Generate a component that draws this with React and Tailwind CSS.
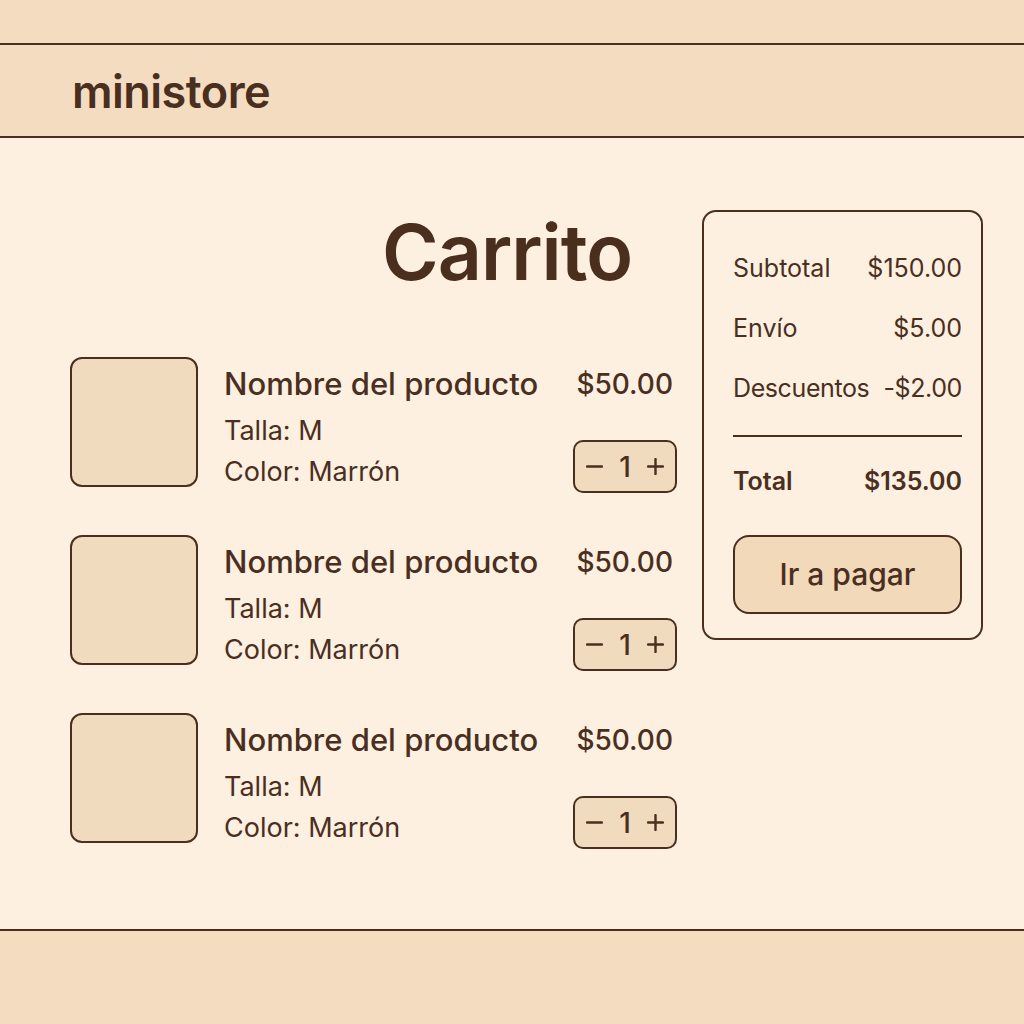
function Minus() {
  return (
    <svg width="17" height="17" viewBox="0 0 17 17" fill="none">
      <line x1="1" y1="8.5" x2="16" y2="8.5" stroke="#4a2f1f" strokeWidth="2.4" strokeLinecap="round" />
    </svg>
  );
}
function Plus() {
  return (
    <svg width="17" height="17" viewBox="0 0 17 17" fill="none">
      <line x1="1" y1="8.5" x2="16" y2="8.5" stroke="#4a2f1f" strokeWidth="2.4" strokeLinecap="round" />
      <line x1="8.5" y1="1" x2="8.5" y2="16" stroke="#4a2f1f" strokeWidth="2.4" strokeLinecap="round" />
    </svg>
  );
}

export default function App() {
  const items = [1, 2, 3];
  const font = { fontFamily: "Inter, 'Noto Sans', sans-serif" };
  return (
    <div className="w-[1024px] h-[1024px] flex flex-col bg-[#fdf0e0] text-[#4a2f1f]" style={font}>
      <div className="h-[43px] bg-[#f3dcc0]" />
      <header className="h-[95px] border-y-2 border-[#4a2f1f] bg-[#f3dcc0] flex items-center pl-[72px]">
        <span className="text-[45px] font-semibold tracking-[-0.5px] leading-none mt-[2px]">ministore</span>
      </header>
      <main className="flex-1 flex pl-[70px] pr-[41px]">
        <div className="flex-1 flex flex-col">
          <h1 className="text-[77px] font-semibold leading-none tracking-[-1px] mt-[76px] pl-[312px]">Carrito</h1>
          <div className="flex flex-col gap-[48px] mt-[66px] pr-[25px]">
            {items.map((i) => (
              <div key={i} className="flex h-[130px]">
                <div className="w-[128px] h-[130px] shrink-0 rounded-[12px] border-2 border-[#4a2f1f] bg-[#f1dbbe]" />
                <div className="flex-1 ml-[26px] flex flex-col">
                  <span className="text-[31px] font-medium leading-[36px] mt-[9px]">Nombre del producto</span>
                  <span className="text-[27px] leading-[41px] mt-[8px]">Talla: M</span>
                  <span className="text-[27px] leading-[41px]">Color: Marrón</span>
                </div>
                <div className="flex flex-col items-end">
                  <span className="text-[28px] font-medium leading-[36px] mt-[9px] mr-[6px] translate-x-[2px]">$50.00</span>
                  <div className="mt-[38px] shrink-0 w-[104px] h-[53px] rounded-[10px] border-2 border-[#4a2f1f] bg-[#f1dbbe] flex items-center justify-between px-[11px]">
                    <Minus />
                    <span className="text-[28px] font-medium leading-none">1</span>
                    <Plus />
                  </div>
                </div>
              </div>
            ))}
          </div>
        </div>
        <aside className="w-[281px] self-start mt-[72px] rounded-[14px] border-2 border-[#4a2f1f] pl-[29px] pr-[19px] pt-[38px] pb-[24px] flex flex-col">
          <div className="flex justify-between text-[25px] leading-[36px]">
            <span>Subtotal</span><span>$150.00</span>
          </div>
          <div className="flex justify-between text-[25px] leading-[36px] mt-[24px]">
            <span>Envío</span><span>$5.00</span>
          </div>
          <div className="flex justify-between text-[25px] leading-[36px] mt-[24px] tracking-[-0.4px]">
            <span>Descuentos</span><span>-$2.00</span>
          </div>
          <div className="h-[2px] bg-[#4a2f1f] mt-[29px]" />
          <div className="flex justify-between text-[25px] font-semibold leading-[36px] mt-[26px]">
            <span>Total</span><span>$135.00</span>
          </div>
          <button className="mt-[36px] h-[79px] rounded-[16px] border-2 border-[#4a2f1f] bg-[#f1d9b9] text-[30px] font-medium">
            Ir a pagar
          </button>
        </aside>
      </main>
      <div className="h-[95px] border-t-2 border-[#4a2f1f] bg-[#f3dcc0]" />
    </div>
  );
}
